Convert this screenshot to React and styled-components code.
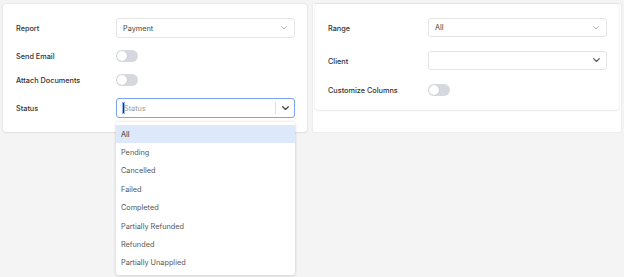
import React from "react";
import styled, { createGlobalStyle } from "styled-components";

const Global = createGlobalStyle`
  html, body { margin: 0; padding: 0; background: #f4f4f4; }
  body { font-family: Inter, "Noto Sans", sans-serif; }
`;

const Page = styled.div`
  display: grid;
  grid-template-columns: 304px 310px;
  column-gap: 5px;
  padding: 3px 2px 0 3px;
  align-items: start;
  width: 624px;
  height: 277px;
  box-sizing: border-box;
`;

const Card = styled.div`
  background: #fff;
  border-radius: 3px;
  box-shadow: 0 0 2px rgba(0, 0, 0, 0.14), 0 1px 2px rgba(0, 0, 0, 0.05);
  padding: 14px 12px 14px 13px;
  margin-top: ${(p) => p.$top || 0}px;
  display: grid;
  grid-template-columns: 100px 179px;
  row-gap: ${(p) => p.$gap}px;
  align-items: center;
`;

const RightPanel = styled.div`
  background: #fff;
  border: 1px solid #ededed;
  border-radius: 2px;
  height: 130px;
  box-sizing: border-box;
  padding: 0 2px;
`;

const Label = styled.div`
  font-size: 7.3px;
  font-weight: 500;
  color: #333;
  line-height: 11px;
  padding-top: 1px;
`;

const Field = styled.div`
  position: relative;
  display: flex;
  align-items: center;
`;

const SelectBox = styled.div`
  box-sizing: border-box;
  width: 179px;
  height: ${(p) => (p.$h ? p.$h : 20)}px;
  border: ${(p) => (p.$focus ? "1.5px solid #7ba5ee" : "1px solid #e4e4e4")};
  border-radius: 3px;
  display: flex;
  align-items: center;
  padding: 0 0 0 6px;
  font-size: 7.3px;
  color: #444;
  background: #fff;
`;

const Value = styled.span`
  flex: 1;
  color: ${(p) => (p.$placeholder ? "#9a9a9a" : "#444")};
  display: flex;
  align-items: center;
`;

const Caret = styled.span`
  display: inline-block;
  width: 1px;
  height: 10px;
  background: #333;
  outline: 1px solid #8fb1ef;
`;

const Sep = styled.span`
  width: 1px;
  height: 12px;
  background: #e0e0e0;
`;

const ChevWrap = styled.span`
  width: ${(p) => p.$w}px;
  display: flex;
  justify-content: center;
  align-items: center;
`;

const Toggle = styled.div`
  width: 22px;
  height: 12px;
  border-radius: 6px;
  background: #d5d8de;
  position: relative;
  &::after {
    content: "";
    position: absolute;
    left: 1px;
    top: 1px;
    width: 10px;
    height: 10px;
    border-radius: 50%;
    background: #fff;
    box-shadow: 0 0 1px rgba(0, 0, 0, 0.2);
  }
`;

const Menu = styled.div`
  position: absolute;
  top: 24px;
  left: 0;
  width: 179px;
  box-sizing: border-box;
  background: #fff;
  border-radius: 3px;
  box-shadow: 0 0 3px rgba(0, 0, 0, 0.15), 0 2px 4px rgba(0, 0, 0, 0.06);
  padding: 3px 0 3px;
  z-index: 5;
`;

const Item = styled.div`
  height: 18.4px;
  display: flex;
  align-items: center;
  padding-left: 5px;
  font-size: 7.3px;
  color: ${(p) => (p.$active ? "#333" : "#555")};
  background: ${(p) => (p.$active ? "#dde8fb" : "transparent")};
`;

const Chevron = ({ color = "#999", w = 7, sw = 1 }) => (
  <svg width={w} height={w * 0.6} viewBox="0 0 10 6" fill="none">
    <path d="M1 1 L5 5 L9 1" stroke={color} strokeWidth={sw * 1.4} strokeLinecap="round" strokeLinejoin="round" />
  </svg>
);

const statuses = [
  "All",
  "Pending",
  "Cancelled",
  "Failed",
  "Completed",
  "Partially Refunded",
  "Refunded",
  "Partially Unapplied",
];

export default function App() {
  return (
    <>
      <Global />
      <Page>
        <Card $gap={12} $top={1}>
          <Label>Report</Label>
          <Field>
            <SelectBox>
              <Value>Payment</Value>
              <ChevWrap $w={20}>
                <Chevron color="#9a9a9a" w={6} />
              </ChevWrap>
            </SelectBox>
          </Field>
          <Label>Send Email</Label>
          <Field>
            <Toggle />
          </Field>
          <Label>Attach Documents</Label>
          <Field>
            <Toggle />
          </Field>
          <Label>Status</Label>
          <Field>
            <SelectBox $focus>
              <Value $placeholder>
                <Caret />
                Status
              </Value>
              <Sep />
              <ChevWrap $w={18}>
                <Chevron color="#444" w={7} sw={1.3} />
              </ChevWrap>
            </SelectBox>
            <Menu>
              {statuses.map((s, i) => (
                <Item key={s} $active={i === 0}>
                  {s}
                </Item>
              ))}
            </Menu>
          </Field>
        </Card>
        <RightPanel>
          <Card $gap={14}>
            <Label>Range</Label>
            <Field>
              <SelectBox $h={19}>
                <Value>All</Value>
                <ChevWrap $w={20}>
                  <Chevron color="#9a9a9a" w={6} />
                </ChevWrap>
              </SelectBox>
            </Field>
            <Label>Client</Label>
            <Field>
              <SelectBox $h={19}>
                <Value />
                <ChevWrap $w={20}>
                  <Chevron color="#555" w={7} sw={1.2} />
                </ChevWrap>
              </SelectBox>
            </Field>
            <Label>Customize Columns</Label>
            <Field>
              <Toggle />
            </Field>
          </Card>
        </RightPanel>
      </Page>
    </>
  );
}
